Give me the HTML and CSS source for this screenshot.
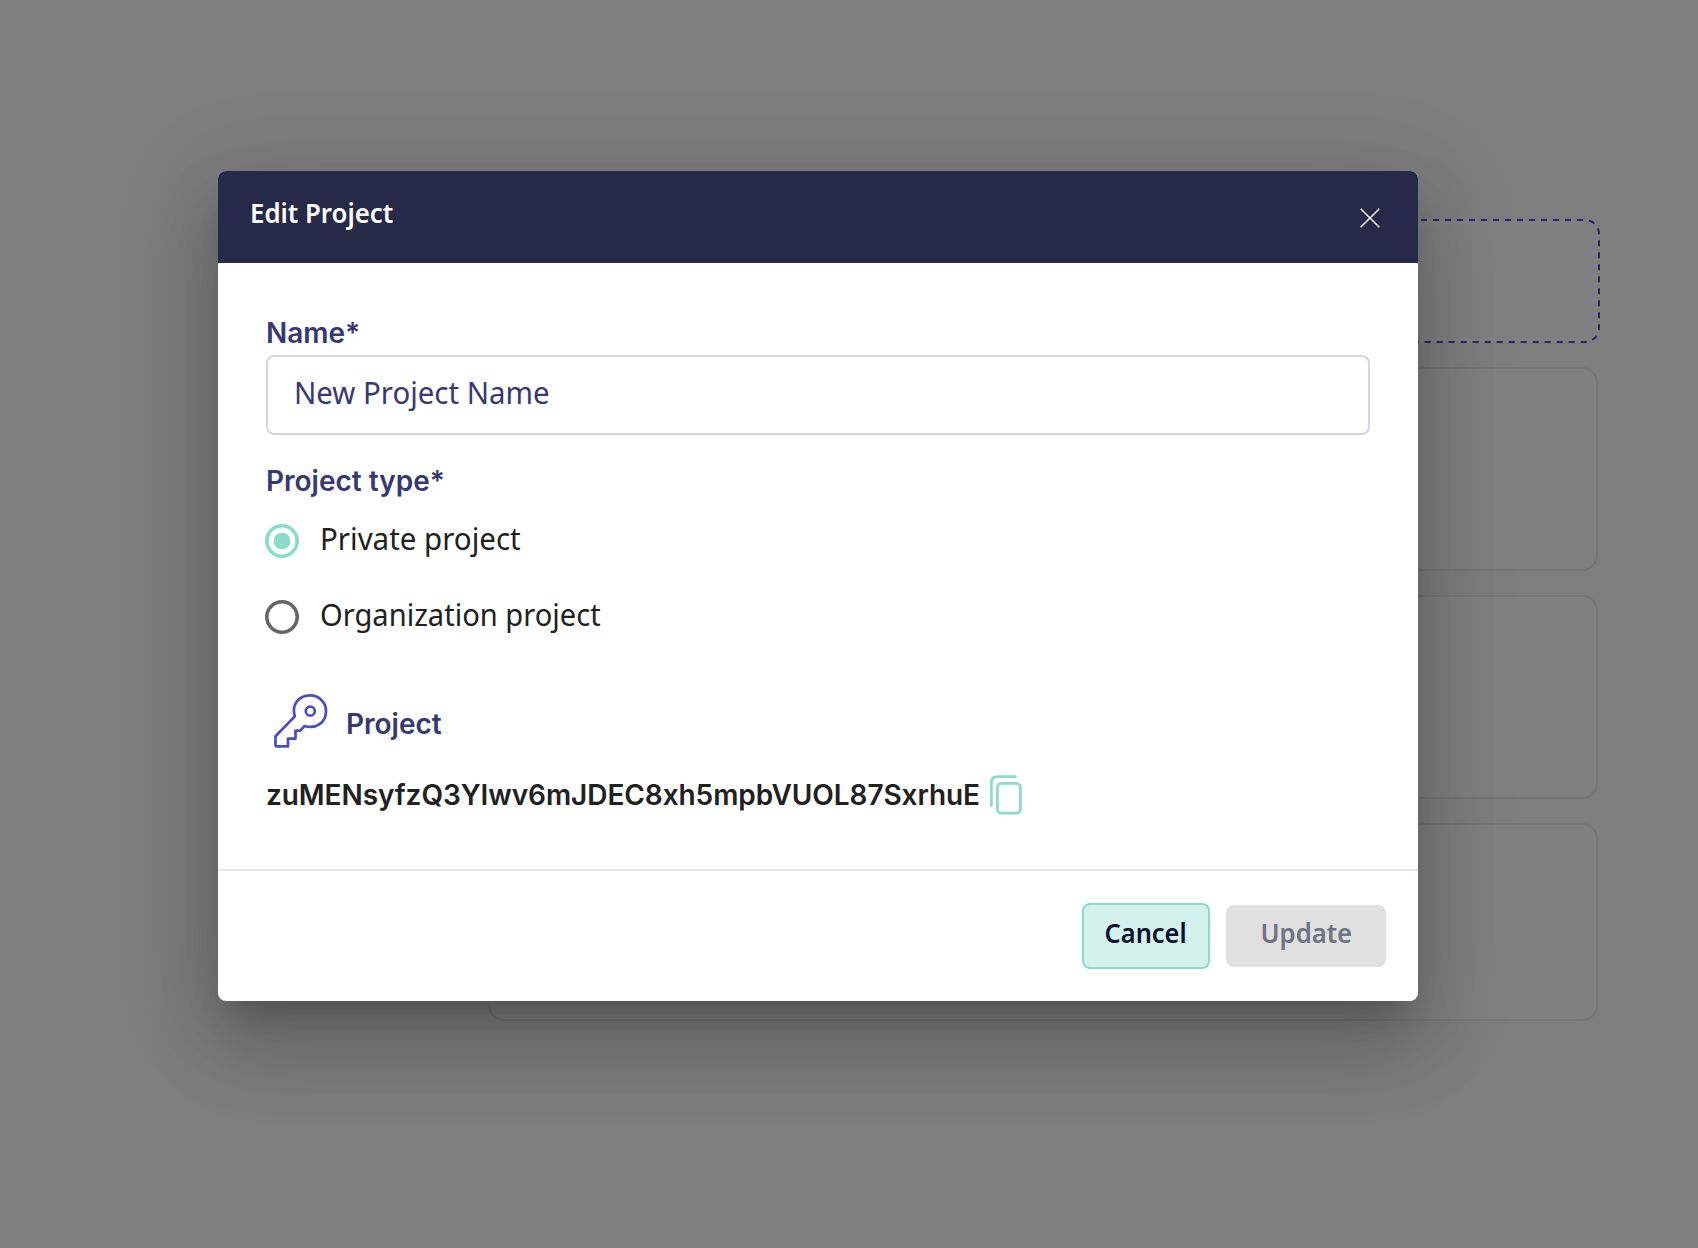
FILE: index.html
```html
<!DOCTYPE html>
<html lang="en">
<head>
<meta charset="utf-8">
<title>Edit Project</title>
<link rel="stylesheet" href="styles.css">
</head>
<body>
<div class="page">
  <div class="new-card">
    <svg width="1112" height="124" viewBox="0 0 1112 124"><rect class="dash" x="1" y="1" width="1110" height="122" rx="14"/></svg>
  </div>
  <div class="card"></div>
  <div class="card"></div>
  <div class="card last"></div>
</div>
<div class="overlay">
  <section class="modal">
    <header class="head">
      <h1 class="title"><span class="t-title">Edit Project</span></h1>
      <svg class="close" width="20" height="20" viewBox="0 0 20 20"><path d="M.7.7l18.6 18.6M19.3.7L.7 19.3"/></svg>
    </header>
    <div class="content">
      <label class="label">Name*</label>
      <div class="input"><span class="t-input">New Project Name</span></div>
      <div class="label type">Project type*</div>
      <div class="option"><span class="radio on"></span><span class="t-private">Private project</span></div>
      <div class="option"><span class="radio"></span><span class="t-org">Organization project</span></div>
      <div class="key-head">
        <svg class="key" width="54" height="54" viewBox="0 0 54 54"><path d="M20.8 22.4C17.2 11 24.6 1.4 36 1.4C45 1.4 52 8.3 52 17.2C52 28.5 42 35.5 30.5 32L26.3 36.7H21.5V44.6H14V52.4H3.5Q1.5 52.4 1.5 50.4V42.3Z"/><circle cx="36.3" cy="17.2" r="4.5"/></svg>
        <span class="label">Project</span>
      </div>
      <div class="key-row">
        <span class="token">zuMENsyfzQ3YIwv6mJDEC8xh5mpbVUOL87SxrhuE</span>
        <svg class="copy" width="32" height="40" viewBox="0 0 32 40"><rect x="7.4" y="8.4" width="23" height="29.7" rx="4"/><path d="M1.4 30.8V7.4Q1.4 1.6 7.2 1.6H25.4"/></svg>
      </div>
    </div>
    <footer class="foot">
      <button class="btn cancel"><span class="t-cancel">Cancel</span></button>
      <button class="btn update"><span class="t-update">Update</span></button>
    </footer>
  </section>
</div>
</body>
</html>
```
FILE: styles.css
```css
* { box-sizing: border-box; }
body {
  margin: 0;
  width: 1698px;
  height: 1248px;
  overflow: hidden;
  background: #7e7e7e;
  font-family: "Noto Sans", sans-serif;
  color: #212121;
}
.page { padding: 219px 98px 0 488px; display: flex; flex-direction: column; gap: 24px; }
.new-card { height: 124px; margin-right: -2px; }
.new-card svg { display: block; }
.dash { fill: #808080; stroke: #28246a; stroke-width: 2; stroke-dasharray: 6 6; stroke-dashoffset: 6; }
.card { width: 1110px; height: 204px; border: 2px solid #757575; border-radius: 16px; background: #808080; }
.last { height: 198px; }
.overlay { position: absolute; inset: 0; padding: 171px 0 0 218px; }
.modal {
  width: 1200px;
  height: 830px;
  display: flex;
  flex-direction: column;
  background: #fff;
  border-radius: 8px;
  box-shadow: 0 22px 30px -14px rgba(0,0,0,.2), 0 48px 76px 6px rgba(0,0,0,.14), 0 18px 92px 16px rgba(0,0,0,.12);
}
.head {
  height: 92px;
  display: flex;
  justify-content: space-between;
  padding: 22px 38px 0 32px;
  background: #262948;
  border-radius: 8px 8px 0 0;
}
.title { margin: 0; font-size: 27px; line-height: 40px; font-weight: 600; color: #fff; }
.close { margin-top: 15px; stroke: #fff; stroke-width: 1.4; }
.content { height: 606px; padding: 52px 48px 0; }
.label { display: block; font: 600 28px/36px Inter, sans-serif; color: #383874; }
.input {
  height: 80px;
  margin-top: 4px;
  padding: 15px 26px 0;
  border: 2px solid #d7d5e3;
  border-radius: 8px;
  font-size: 31px;
  line-height: 40px;
  color: #383874;
}
.type { margin-top: 28px; }
.option { display: flex; align-items: center; height: 76px; margin-left: -1px; gap: 21px; font-size: 30px; line-height: 40px; }
.type + .option { margin-top: 4px; }
.radio { width: 34px; height: 34px; box-shadow: inset 0 0 0 3.6px #666; border-radius: 50%; flex: none; }
.radio.on { box-shadow: inset 0 0 0 3.6px #88dcc9; background: radial-gradient(circle, #88dcc9 8px, transparent 8.6px); }
.option > span:last-child { padding-bottom: 4px; }
.key-head { display: flex; gap: 18px; margin: 39px 0 0 8px; height: 54px; }
.key, .copy { fill: none; stroke-width: 2.7; stroke-linejoin: round; stroke-linecap: round; flex: none; }
.key { stroke: #4c4bc6; }
.key-head .label { padding-top: 12px; }
.key-row { display: flex; align-items: center; gap: 10px; margin-top: 27px; height: 40px; }
.token { font: 600 28px/36px Inter, sans-serif; letter-spacing: -.07px; white-space: nowrap; }
.copy { stroke: #88dcc9; }
.foot { height: 132px; display: flex; align-items: center; justify-content: flex-end; gap: 16px; padding: 0 32px 0 0; border-top: 2px solid #e4e6f7; }
.btn { padding: 0 0 6px; border-radius: 8px; font: 600 27px/36px "Noto Sans", sans-serif; }
.cancel { width: 128px; height: 66px; background: #d2f2eb; border: 2px solid #88dcc9; color: #0a1033; }
.update { width: 160px; height: 62px; background: #e0e0e0; border: 0; color: #6d7484; }
[class^="t-"] { display: inline-block; white-space: nowrap; transform-origin: 0 50%; }
.t-title { transform: scaleX(.955); }
.t-input { transform: scaleX(.948); }
.t-private { transform: scaleX(.983); }
.t-org { transform: scaleX(.97); }
.btn [class^="t-"] { transform-origin: 50% 50%; }
.t-cancel { transform: scaleX(.94); }
.t-update { transform: scaleX(.95); }
```
